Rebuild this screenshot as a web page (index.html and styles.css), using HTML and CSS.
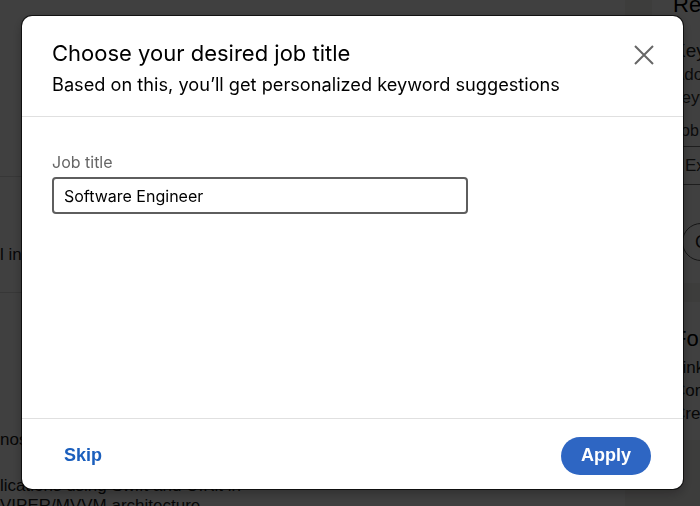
FILE: index.html
```html
<!DOCTYPE html>
<html lang="en">
<head>
<meta charset="utf-8">
<title>Choose your desired job title</title>
<link rel="stylesheet" href="styles.css">
</head>
<body>
<div class="page">
  <main class="main">
    <section class="sec sec-top"></section>
    <section class="sec sec-mid">
      <p class="bg-text">l in your resume</p>
    </section>
    <section class="sec sec-low">
      <p class="bg-text t1">nost</p>
      <p class="bg-text t2">lications using Swift and UIKit in</p>
      <p class="bg-text t3">VIPER/MVVM architecture</p>
    </section>
  </main>
  <aside class="side">
    <div class="card card-a">
      <h2 class="card-title">Resume keywords</h2>
      <p class="card-line strong">Keywords matter</p>
      <p class="card-line sub">Adopt the keywords recruiters use</p>
      <p class="card-line sub">keywords for your role</p>
      <p class="card-label">Job title</p>
      <div class="card-input">Ex: Software Engineer</div>
      <div class="card-btn">Check</div>
    </div>
    <div class="card card-b">
      <h2 class="card-title">Format tips</h2>
      <p class="card-line">Link your profile</p>
      <p class="card-line">Combine sections</p>
      <p class="card-line">Create a summary</p>
    </div>
  </aside>
</div>

<div class="overlay">
  <div class="modal" role="dialog" aria-labelledby="m-title">
    <header class="m-head">
      <div class="m-head-text">
        <h1 id="m-title" class="m-title">Choose your desired job title</h1>
        <p class="m-sub">Based on this, you’ll get personalized keyword suggestions</p>
      </div>
      <button class="m-close" aria-label="Dismiss">
        <svg width="24" height="24" viewBox="0 0 24 24" aria-hidden="true">
          <path d="M3 3 L21 21 M21 3 L3 21" stroke="#666666" stroke-width="2" stroke-linecap="butt" fill="none"/>
        </svg>
      </button>
    </header>
    <div class="m-body">
      <label class="m-label" for="jt">Job title</label>
      <input id="jt" class="m-input" type="text" value="Software Engineer">
    </div>
    <footer class="m-foot">
      <button class="btn-skip">Skip</button>
      <button class="btn-apply">Apply</button>
    </footer>
  </div>
</div>
</body>
</html>
```
FILE: styles.css
```css
html, body {
  margin: 0;
  padding: 0;
  width: 700px;
  height: 506px;
  overflow: hidden;
}
body {
  background: #f3f2ef;
  font-family: "Liberation Sans", Arial, sans-serif;
  color: #000;
}
.page {
  display: flex;
  gap: 27px;
  width: 1000px;
}
.main {
  width: 625px;
  background: #ffffff;
  flex: none;
}
.sec {
  border-bottom: 1px solid #dcdcdc;
}
.sec-top { height: 176px; }
.sec-mid {
  height: 116px;
  padding-top: 67px;
  box-sizing: border-box;
}
.sec-low {
  border-bottom: none;
  padding-top: 136px;
  height: 300px;
  box-sizing: border-box;
}
.bg-text {
  margin: 0;
  font-size: 17px;
  line-height: 22px;
  color: #1a1a1a;
  white-space: nowrap;
}
.t1 { margin-bottom: 25px; }
.t2 { line-height: 20px; }
.t3 { line-height: 20px; }

.side {
  width: 300px;
  flex: none;
}
.card {
  background: #ffffff;
  padding: 0 20px 0 21px;
  box-sizing: border-box;
}
.card-a {
  margin-top: -10px;
  height: 293px;
  padding-top: 2px;
}
.card-b {
  margin-top: 19px;
  height: 138px;
  padding-top: 24px;
}
.card-title {
  margin: 0;
  font-size: 22px;
  line-height: 26px;
  font-weight: 400;
}
.card-line {
  margin: 0;
  font-size: 17px;
  line-height: 23px;
  color: #222;
  white-space: nowrap;
}
.card-line.strong {
  margin-top: 20px;
  font-size: 19px;
  line-height: 25px;
}
.card-line.sub { color: #333; }
.card-label {
  margin: 12px 0 0;
  font-size: 16px;
  line-height: 20px;
  color: #333;
}
.card-input {
  margin-top: 5px;
  height: 37px;
  border: 1px solid #777;
  border-radius: 4px;
  padding-left: 11px;
  font-size: 17px;
  line-height: 37px;
  color: #333;
}
.card-btn {
  margin-top: 38px;
  margin-left: 9px;
  width: 120px;
  height: 36px;
  border: 1px solid #555;
  border-radius: 19px;
  padding-left: 12px;
  font-size: 18px;
  line-height: 36px;
  color: #222;
}
.card-b .card-title { margin-bottom: 4px; }

.overlay {
  position: fixed;
  top: 0;
  left: 0;
  right: 0;
  bottom: 0;
  background: rgba(0, 0, 0, 0.75);
  padding-top: 16px;
  padding-left: 22px;
  box-sizing: border-box;
}
.modal {
  width: 661px;
  height: 473px;
  background: #ffffff;
  border-radius: 10px;
  box-shadow: 0 0 0 1px rgba(0, 0, 0, 0.7), 0 4px 12px rgba(0, 0, 0, 0.3);
  display: flex;
  flex-direction: column;
  overflow: hidden;
  font-family: Inter, "Liberation Sans", Arial, sans-serif;
}
.m-head {
  display: flex;
  justify-content: space-between;
  align-items: flex-start;
  padding: 23px 23px 0 30px;
  height: 101px;
  box-sizing: border-box;
  border-bottom: 1px solid #e0e0e0;
}
.m-title {
  margin: 0;
  font-size: 22px;
  line-height: 28px;
  font-weight: 400;
  color: #000;
}
.m-sub {
  margin: 5px 0 0;
  font-size: 18.2px;
  line-height: 24px;
  color: #000;
}
.m-close {
  width: 32px;
  height: 32px;
  margin-top: 0;
  padding: 0;
  border: none;
  background: transparent;
  display: flex;
  align-items: center;
  justify-content: center;
}
.m-body {
  flex: 1;
  padding: 35px 30px 0;
  display: flex;
  flex-direction: column;
  align-items: flex-start;
}
.m-label {
  font-size: 16px;
  line-height: 20px;
  color: #666666;
  margin-bottom: 5px;
}
.m-input {
  width: 416px;
  height: 37px;
  box-sizing: border-box;
  border: 2px solid #5e5e5e;
  border-radius: 4px;
  padding: 0 10px;
  font-family: Inter, "Liberation Sans", Arial, sans-serif;
  font-size: 16px;
  color: #000;
  outline: none;
}
.m-foot {
  height: 71px;
  box-sizing: border-box;
  border-top: 1px solid #e0e0e0;
  display: flex;
  justify-content: space-between;
  align-items: center;
  padding: 3px 32px 0 30px;
}
.btn-skip {
  border: none;
  background: transparent;
  padding: 0 12px;
  font-family: "Liberation Sans", Arial, sans-serif;
  font-size: 18px;
  font-weight: 700;
  color: #1b5fbd;
  height: 38px;
}
.btn-apply {
  border: none;
  background: #2e66c3;
  border-radius: 19px;
  height: 38px;
  width: 90px;
  padding: 0;
  font-family: "Liberation Sans", Arial, sans-serif;
  font-size: 18px;
  font-weight: 700;
  color: #ffffff;
}
```
